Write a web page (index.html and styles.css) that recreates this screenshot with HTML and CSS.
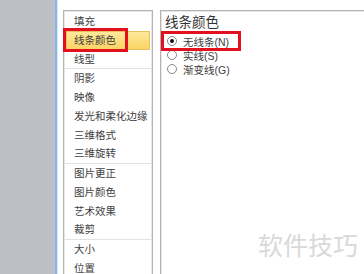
FILE: index.html
```html
<!DOCTYPE html>
<html lang="zh">
<head>
<meta charset="utf-8">
<link rel="stylesheet" href="styles.css">
</head>
<body>
<div class="page">
  <div class="side"></div>
  <div class="main">
    <div class="list">
      <div class="item">填充</div>
      <div class="item active">线条颜色</div>
      <div class="item">线型</div>
      <div class="sep"></div>
      <div class="item">阴影</div>
      <div class="item">映像</div>
      <div class="item">发光和柔化边缘</div>
      <div class="item">三维格式</div>
      <div class="item">三维旋转</div>
      <div class="sep"></div>
      <div class="item">图片更正</div>
      <div class="item">图片颜色</div>
      <div class="item">艺术效果</div>
      <div class="item">裁剪</div>
      <div class="sep"></div>
      <div class="item">大小</div>
      <div class="item">位置</div>
    </div>
    <div class="pane">
      <div class="title">线条颜色</div>
      <div class="radio checked"><span class="dot"></span><span>无线条(N)</span></div>
      <div class="radio"><span class="dot"></span><span>实线(S)</span></div>
      <div class="radio"><span class="dot"></span><span>渐变线(G)</span></div>
    </div>
  </div>
  <div class="mark mark-left"></div>
  <div class="mark mark-right"></div>
  <div class="watermark">软件技巧</div>
</div>
</body>
</html>
```
FILE: styles.css
```css
html, body {
  margin: 0;
  padding: 0;
  background: #ffffff;
}
.page {
  position: relative;
  width: 364px;
  height: 274px;
  overflow: hidden;
  display: flex;
  font-family: "Liberation Sans", "Noto Sans CJK SC", sans-serif;
  color: #3e3e3e;
}
.side {
  width: 55px;
  flex: none;
  background: repeating-linear-gradient(90deg, #b9bcc0 0px, #c1c4c8 1px, #b5b8bc 2px);
  border-right: 2px solid #86b6e6;
  box-shadow: 1px 0 0 #d8e8f6;
}
.main {
  flex: 1;
  display: flex;
  gap: 7px;
  padding: 10px 0 0 6px;
}
.list {
  width: 88px;
  flex: none;
  height: 300px;
  border: 1px solid #b4b4b4;
  box-shadow: inset 1px 1px 0 #e6e6e6, inset -1px 0 0 #e6e6e6;
  padding-top: 1px;
}
.item {
  height: 18.75px;
  line-height: 18.75px;
  padding-left: 8px;
  font-size: 10.5px;
  white-space: nowrap;
  margin: 0 2px;
}
.item.active {
  background: linear-gradient(#fde99a, #fbd465);
  border: 1px solid #e8c060;
  height: 16.75px;
  line-height: 16.75px;
  padding-left: 7px;
}
.sep {
  height: 1px;
  background: #e2e2e2;
  margin: 0 1px;
}
.pane {
  flex: 1;
  border-top: 1px solid #b4b4b4;
  border-left: 1px solid #b4b4b4;
  box-shadow: inset 1px 1px 0 #e6e6e6;
  padding: 3px 0 0 4px;
}
.title {
  font-size: 13.5px;
  line-height: 18px;
  margin-bottom: 2px;
  color: #333;
}
.radio {
  display: flex;
  align-items: center;
  height: 14px;
  font-size: 10.5px;
  gap: 6px;
  padding-left: 2px;
  white-space: nowrap;
}
.dot {
  width: 8px;
  height: 8px;
  border: 1px solid #8a8a8a;
  border-radius: 50%;
  background: #fff;
  position: relative;
  flex: none;
}
.radio.checked .dot::after {
  content: "";
  position: absolute;
  left: 2px;
  top: 2px;
  width: 4px;
  height: 4px;
  border-radius: 50%;
  background: #111;
}
.mark {
  position: absolute;
  border: 3px solid #e3101e;
}
.mark-left {
  left: 63px;
  top: 28px;
  width: 59px;
  height: 18px;
}
.mark-right {
  left: 161px;
  top: 31px;
  width: 74px;
  height: 14px;
}
.watermark {
  position: absolute;
  left: 258px;
  top: 229px;
  font-family: "Noto Sans CJK SC", sans-serif;
  font-size: 25px;
  line-height: 30px;
  color: #d9d9d9;
}
```
